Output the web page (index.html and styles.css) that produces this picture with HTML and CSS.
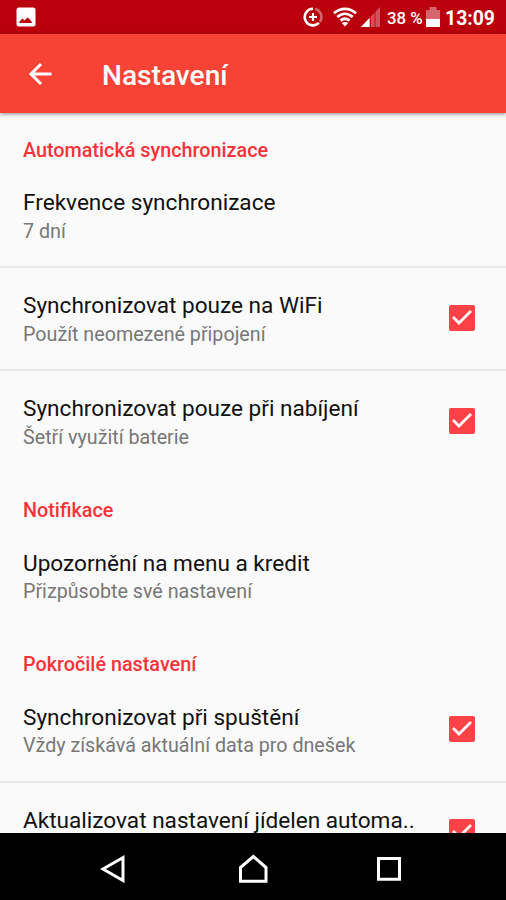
FILE: index.html
```html
<!DOCTYPE html>
<html lang="cs">
<head>
<meta charset="utf-8">
<title>Nastavení</title>
<link rel="stylesheet" href="styles.css">
</head>
<body>
<div class="screen">
  <div class="status">
    <svg class="photo" width="20" height="20" viewBox="0 0 20 20"><rect x=".5" y=".5" width="19" height="19" rx="2.5" fill="#fff"/><path d="M3.500 16V14.500L6.500 11.500 8.500 13.500 11.500 10.500 13.500 12 16.500 16Z" fill="#b9000c"/></svg>
    <svg class="saver" width="20" height="20" viewBox="0 0 20 20" fill="none" stroke="#fff" stroke-width="2.6"><path d="M10 1.7A8.3 8.3 0 1 0 15.9 15.9"/><path d="M12 1.9A8.3 8.3 0 0 1 16.8 14.8" opacity=".4"/><path d="M10 6v8M6 10h8" stroke-width="2.2"/></svg>
    <svg class="wifi" width="24" height="20" viewBox="0 0 24 20" fill="none" stroke="#fff" stroke-width="2.8"><path d="M1 6.2C7.500 .3 16.500 .3 23 6.200"/><path d="M4.300 10C9 5.800 15 5.800 19.700 10"/><path d="M7.500 13.600C10.500 11.200 13.500 11.200 16.500 13.600"/><path d="M8.800 15.900Q12 13.900 15.200 15.900L12 19.500Z" fill="#fff" stroke="none"/></svg>
    <svg class="signal" width="19" height="20" viewBox="0 0 19 20"><path d="M0 20 19 0V20Z" fill="#fff" opacity=".32"/><path d="M0 20 8.500 11V20Z" fill="#fff"/><path d="M9.500 9v11M14 5v15" stroke="#b9000c" stroke-width=".8"/></svg>
    <span class="percent">38 %</span>
    <svg class="battery" width="14" height="20" viewBox="0 0 14 20"><path d="M0 3H3.500V0H10.500V3H14V12H0Z" fill="#fff" opacity=".4"/><path d="M0 12H14V20H0Z" fill="#fff"/></svg>
    <span class="clock">13:09</span>
  </div>
  <header class="toolbar">
    <svg class="back" width="24" height="24" viewBox="0 0 24 24" fill="none" stroke="#fff" stroke-width="3"><path d="M13 2 3 12 13 22M3 12H23.500"/></svg>
    <h1>Nastavení</h1>
  </header>
  <main class="list">
    <h2>Automatická synchronizace</h2>
    <div class="item"><div><p class="title">Frekvence synchronizace</p><p class="summary">7 dní</p></div></div>
    <div class="item line"><div><p class="title">Synchronizovat pouze na WiFi</p><p class="summary">Použít neomezené připojení</p></div>
      <svg class="check" viewBox="0 0 26 26"><rect width="26" height="26" rx="2"/><path d="M4 12 10 18 22 6"/></svg></div>
    <div class="item line"><div><p class="title">Synchronizovat pouze při nabíjení</p><p class="summary">Šetří využití baterie</p></div>
      <svg class="check" viewBox="0 0 26 26"><rect width="26" height="26" rx="2"/><path d="M4 12 10 18 22 6"/></svg></div>
    <h2>Notifikace</h2>
    <div class="item"><div><p class="title">Upozornění na menu a kredit</p><p class="summary">Přizpůsobte své nastavení</p></div></div>
    <h2>Pokročilé nastavení</h2>
    <div class="item"><div><p class="title">Synchronizovat při spuštění</p><p class="summary">Vždy získává aktuální data pro dnešek</p></div>
      <svg class="check" viewBox="0 0 26 26"><rect width="26" height="26" rx="2"/><path d="M4 12 10 18 22 6"/></svg></div>
    <div class="item line"><div><p class="title">Aktualizovat nastavení jídelen automa..</p></div>
      <svg class="check" viewBox="0 0 26 26"><rect width="26" height="26" rx="2"/><path d="M4 12 10 18 22 6"/></svg></div>
  </main>
  <nav class="nav">
    <svg width="28" height="30" viewBox="0 0 28 30"><path d="M4 16 24 4.500V27.500Z"/></svg>
    <svg class="home" width="30" height="30" viewBox="0 0 30 30"><path d="M2.500 28.200V14.500L15.300 3.500 28 14.500V28.200Z"/></svg>
    <svg width="28" height="30" viewBox="0 0 28 30"><path d="M3.500 5.500H24.500V26.200H3.500Z"/></svg>
  </nav>
</div>
</body>
</html>
```

FILE: styles.css
```css
* { box-sizing: border-box; }
body { margin: 0; font-family: Roboto, sans-serif; }
h1, h2, p { margin: 0; font-weight: 400; white-space: nowrap; }
svg { display: block; flex: none; }
.screen { width: 506px; height: 900px; display: flex; flex-direction: column; overflow: hidden; background: #fafafa; }
.status { height: 34px; flex: none; display: flex; align-items: center; padding: 0 11px 0 16px; background: #b9000c; color: #fff; }
.saver { margin-left: auto; }
.wifi { margin-left: 10px; }
.signal { margin-left: 4px; }
.percent { width: 35px; margin: 2px 0 0 7px; font-size: 16.8px; font-weight: 500; line-height: 20px; white-space: nowrap; }
.battery { margin-left: 4px; }
.clock { margin: 3px 0 0 5px; font-size: 19.4px; font-weight: 700; line-height: 20px; }
.toolbar { height: 79px; flex: none; display: flex; align-items: center; padding-left: 28px; background: #f74336; color: #fff; box-shadow: 0 1px 4px rgba(0, 0, 0, .45); z-index: 1; }
.toolbar h1 { margin: 4px 0 0 50px; font-size: 28.1px; font-weight: 500; line-height: 34px; }
.list { height: 720px; flex: none; overflow: hidden; }
h2 { height: 50.9px; padding: 24.6px 23px 0; font-size: 19.8px; font-weight: 500; line-height: 26px; color: #f8343a; }
.item { height: 103.2px; display: flex; justify-content: space-between; padding: 25.2px 31px 0 23px; }
.line { box-shadow: 0 -1px #e9e9e9, inset 0 1px #e9e9e9; }
.title { font-size: 22.6px; line-height: 28px; color: #111; }
.summary { margin-top: 1.7px; font-size: 19.7px; line-height: 26px; color: #777; }
.check { width: 26px; height: 26px; margin-top: 12.5px; }
.check rect { fill: #fb4247; }
.check path { fill: none; stroke: #fff; stroke-width: 2.8; }
.nav { height: 67px; flex: none; display: flex; justify-content: space-between; padding: 20px 103px 0 99px; background: #000; }
.nav path { fill: none; stroke: #fff; stroke-width: 3; }
.home { margin-left: 4px; }
```
